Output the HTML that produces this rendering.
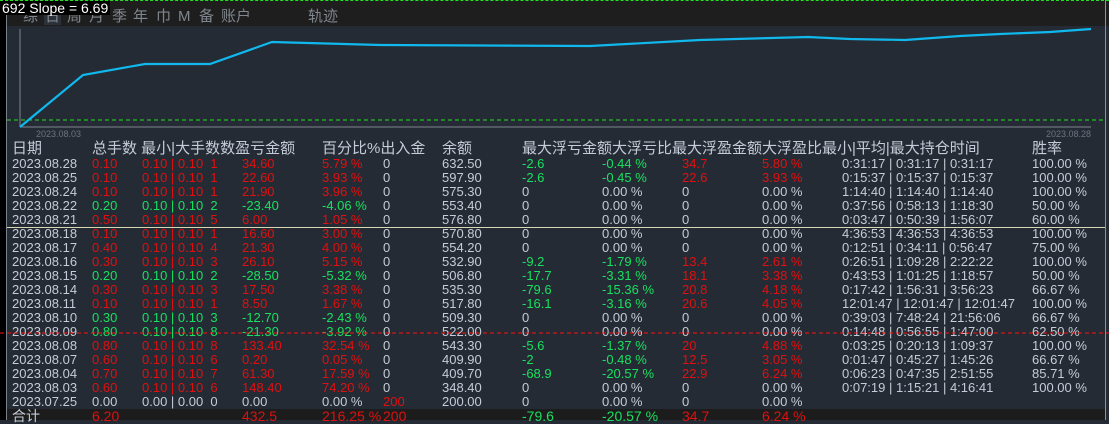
<!DOCTYPE html>
<html><head><meta charset="utf-8"><style>
*{margin:0;padding:0;box-sizing:border-box}
body{width:1109px;height:420px;overflow:hidden;background:#252b34;font-family:"Liberation Sans","Noto Sans CJK SC",sans-serif;color:#c3ccd8;position:relative}
.abs{position:absolute}
.r{position:absolute;left:0;width:1109px;height:14px;font-size:13px;line-height:14px;white-space:pre}
.r span{position:absolute;top:0}
.R{color:#e01010}.G{color:#18e060}
.h{font-size:15px;color:#c3ccd8}
.t{position:absolute;top:8px;font-size:15px;color:#80868e;line-height:18px}
</style></head><body>
<div class="abs" style="left:0;top:0;width:1109px;height:26px;background:#1e1e1e"></div>
<div class="abs" style="left:0;top:0;width:7px;height:420px;background:#000"></div>
<div class="abs" style="left:6px;top:0;width:1px;height:420px;background:#7a828c"></div>
<div class="abs" style="left:1105px;top:0;width:1px;height:420px;background:#8a929c"></div>
<div class="abs" style="left:0;top:0;width:1109px;height:0;border-top:1px dashed #22e022"></div>
<div class="abs" style="left:44px;top:10px;width:17px;height:15px;background:#2c3038"></div>
<span class="t" style="left:23px">综</span><span class="t" style="left:45px">日</span><span class="t" style="left:67px">周</span><span class="t" style="left:89px">月</span><span class="t" style="left:112px">季</span><span class="t" style="left:133px">年</span><span class="t" style="left:156px">巾</span><span class="t" style="left:178px">M</span><span class="t" style="left:199px">备</span><span class="t" style="left:221px">账户</span><span class="t" style="left:308px">轨迹</span>
<div class="abs" style="left:0;top:1px;font-size:14px;color:#fff;background:#000;padding:0 2px;line-height:14px">692 Slope = 6.69</div>
<svg class="abs" style="left:0;top:0" width="1109" height="140">
<line x1="20" y1="29" x2="20" y2="127" stroke="#80868e"/>
<line x1="20" y1="127" x2="1091" y2="127" stroke="#80868e"/>
<line x1="7" y1="120" x2="1106" y2="120" stroke="#22e022" stroke-dasharray="4,3"/>
<polyline fill="none" stroke="#10b8ee" stroke-width="2.2" points="20,127 83,75 145,64 210,64 272,42 380,45 590,46 700,40 808,37 850,39 905,40 960,36 1000,34 1050,32 1091,29"/>
<text x="36" y="137" font-size="9" fill="#6a7480" font-family="Liberation Sans">2023.08.03</text>
<text x="1046" y="137" font-size="9" fill="#6a7480" font-family="Liberation Sans">2023.08.28</text>
</svg>
<div class="r h" style="top:142px;height:17px"><span style="left:12px">日期</span><span style="left:92px">总手数 最小|大手数数盈亏金额</span><span style="left:322px">百分比%出入金</span><span style="left:442px">余额</span><span style="left:522px">最大浮亏金额大浮亏比最大浮盈金额大浮盈比最小|平均|最大持仓时间</span><span style="left:1032px">胜率</span></div>
<div class="abs" style="left:7px;top:227px;width:1098px;height:1px;background:#d8d8b0"></div>
<div class="abs" style="left:7px;top:409px;width:1098px;height:11px;background:#1c1c1c"></div>
<div class="r" style="top:157px"><span style="left:12px">2023.08.28</span><span class="R" style="left:92px">0.10</span><span class="R" style="left:142px">0.10 | 0.10  1</span><span class="R" style="left:242px">34.60</span><span class="R" style="left:322px">5.79 %</span><span style="left:383px">0</span><span style="left:442px">632.50</span><span class="G" style="left:522px">-2.6</span><span class="G" style="left:602px">-0.44 %</span><span class="R" style="left:682px">34.7</span><span class="R" style="left:762px">5.80 %</span><span style="left:842px">0:31:17 | 0:31:17 | 0:31:17</span><span style="left:1032px">100.00 %</span></div>
<div class="r" style="top:171px"><span style="left:12px">2023.08.25</span><span class="R" style="left:92px">0.10</span><span class="R" style="left:142px">0.10 | 0.10  1</span><span class="R" style="left:242px">22.60</span><span class="R" style="left:322px">3.93 %</span><span style="left:383px">0</span><span style="left:442px">597.90</span><span class="G" style="left:522px">-2.6</span><span class="G" style="left:602px">-0.45 %</span><span class="R" style="left:682px">22.6</span><span class="R" style="left:762px">3.93 %</span><span style="left:842px">0:15:37 | 0:15:37 | 0:15:37</span><span style="left:1032px">100.00 %</span></div>
<div class="r" style="top:185px"><span style="left:12px">2023.08.24</span><span class="R" style="left:92px">0.10</span><span class="R" style="left:142px">0.10 | 0.10  1</span><span class="R" style="left:242px">21.90</span><span class="R" style="left:322px">3.96 %</span><span style="left:383px">0</span><span style="left:442px">575.30</span><span style="left:522px">0</span><span style="left:602px">0.00 %</span><span style="left:682px">0</span><span style="left:762px">0.00 %</span><span style="left:842px">1:14:40 | 1:14:40 | 1:14:40</span><span style="left:1032px">100.00 %</span></div>
<div class="r" style="top:199px"><span style="left:12px">2023.08.22</span><span class="G" style="left:92px">0.20</span><span class="G" style="left:142px">0.10 | 0.10  2</span><span class="G" style="left:242px">-23.40</span><span class="G" style="left:322px">-4.06 %</span><span style="left:383px">0</span><span style="left:442px">553.40</span><span style="left:522px">0</span><span style="left:602px">0.00 %</span><span style="left:682px">0</span><span style="left:762px">0.00 %</span><span style="left:842px">0:37:56 | 0:58:13 | 1:18:30</span><span style="left:1032px">50.00 %</span></div>
<div class="r" style="top:213px"><span style="left:12px">2023.08.21</span><span class="R" style="left:92px">0.50</span><span class="R" style="left:142px">0.10 | 0.10  5</span><span class="R" style="left:242px">6.00</span><span class="R" style="left:322px">1.05 %</span><span style="left:383px">0</span><span style="left:442px">576.80</span><span style="left:522px">0</span><span style="left:602px">0.00 %</span><span style="left:682px">0</span><span style="left:762px">0.00 %</span><span style="left:842px">0:03:47 | 0:50:39 | 1:56:07</span><span style="left:1032px">60.00 %</span></div>
<div class="r" style="top:227px"><span style="left:12px">2023.08.18</span><span class="R" style="left:92px">0.10</span><span class="R" style="left:142px">0.10 | 0.10  1</span><span class="R" style="left:242px">16.60</span><span class="R" style="left:322px">3.00 %</span><span style="left:383px">0</span><span style="left:442px">570.80</span><span style="left:522px">0</span><span style="left:602px">0.00 %</span><span style="left:682px">0</span><span style="left:762px">0.00 %</span><span style="left:842px">4:36:53 | 4:36:53 | 4:36:53</span><span style="left:1032px">100.00 %</span></div>
<div class="r" style="top:241px"><span style="left:12px">2023.08.17</span><span class="R" style="left:92px">0.40</span><span class="R" style="left:142px">0.10 | 0.10  4</span><span class="R" style="left:242px">21.30</span><span class="R" style="left:322px">4.00 %</span><span style="left:383px">0</span><span style="left:442px">554.20</span><span style="left:522px">0</span><span style="left:602px">0.00 %</span><span style="left:682px">0</span><span style="left:762px">0.00 %</span><span style="left:842px">0:12:51 | 0:34:11 | 0:56:47</span><span style="left:1032px">75.00 %</span></div>
<div class="r" style="top:255px"><span style="left:12px">2023.08.16</span><span class="R" style="left:92px">0.30</span><span class="R" style="left:142px">0.10 | 0.10  3</span><span class="R" style="left:242px">26.10</span><span class="R" style="left:322px">5.15 %</span><span style="left:383px">0</span><span style="left:442px">532.90</span><span class="G" style="left:522px">-9.2</span><span class="G" style="left:602px">-1.79 %</span><span class="R" style="left:682px">13.4</span><span class="R" style="left:762px">2.61 %</span><span style="left:842px">0:26:51 | 1:09:28 | 2:22:22</span><span style="left:1032px">100.00 %</span></div>
<div class="r" style="top:269px"><span style="left:12px">2023.08.15</span><span class="G" style="left:92px">0.20</span><span class="G" style="left:142px">0.10 | 0.10  2</span><span class="G" style="left:242px">-28.50</span><span class="G" style="left:322px">-5.32 %</span><span style="left:383px">0</span><span style="left:442px">506.80</span><span class="G" style="left:522px">-17.7</span><span class="G" style="left:602px">-3.31 %</span><span class="R" style="left:682px">18.1</span><span class="R" style="left:762px">3.38 %</span><span style="left:842px">0:43:53 | 1:01:25 | 1:18:57</span><span style="left:1032px">50.00 %</span></div>
<div class="r" style="top:283px"><span style="left:12px">2023.08.14</span><span class="R" style="left:92px">0.30</span><span class="R" style="left:142px">0.10 | 0.10  3</span><span class="R" style="left:242px">17.50</span><span class="R" style="left:322px">3.38 %</span><span style="left:383px">0</span><span style="left:442px">535.30</span><span class="G" style="left:522px">-79.6</span><span class="G" style="left:602px">-15.36 %</span><span class="R" style="left:682px">20.8</span><span class="R" style="left:762px">4.18 %</span><span style="left:842px">0:17:42 | 1:56:31 | 3:56:23</span><span style="left:1032px">66.67 %</span></div>
<div class="r" style="top:297px"><span style="left:12px">2023.08.11</span><span class="R" style="left:92px">0.10</span><span class="R" style="left:142px">0.10 | 0.10  1</span><span class="R" style="left:242px">8.50</span><span class="R" style="left:322px">1.67 %</span><span style="left:383px">0</span><span style="left:442px">517.80</span><span class="G" style="left:522px">-16.1</span><span class="G" style="left:602px">-3.16 %</span><span class="R" style="left:682px">20.6</span><span class="R" style="left:762px">4.05 %</span><span style="left:842px">12:01:47 | 12:01:47 | 12:01:47</span><span style="left:1032px">100.00 %</span></div>
<div class="r" style="top:311px"><span style="left:12px">2023.08.10</span><span class="G" style="left:92px">0.30</span><span class="G" style="left:142px">0.10 | 0.10  3</span><span class="G" style="left:242px">-12.70</span><span class="G" style="left:322px">-2.43 %</span><span style="left:383px">0</span><span style="left:442px">509.30</span><span style="left:522px">0</span><span style="left:602px">0.00 %</span><span style="left:682px">0</span><span style="left:762px">0.00 %</span><span style="left:842px">0:39:03 | 7:48:24 | 21:56:06</span><span style="left:1032px">66.67 %</span></div>
<div class="r" style="top:325px"><span style="left:12px">2023.08.09</span><span class="G" style="left:92px">0.80</span><span class="G" style="left:142px">0.10 | 0.10  8</span><span class="G" style="left:242px">-21.30</span><span class="G" style="left:322px">-3.92 %</span><span style="left:383px">0</span><span style="left:442px">522.00</span><span style="left:522px">0</span><span style="left:602px">0.00 %</span><span style="left:682px">0</span><span style="left:762px">0.00 %</span><span style="left:842px">0:14:48 | 0:56:55 | 1:47:00</span><span style="left:1032px">62.50 %</span></div>
<div class="r" style="top:339px"><span style="left:12px">2023.08.08</span><span class="R" style="left:92px">0.80</span><span class="R" style="left:142px">0.10 | 0.10  8</span><span class="R" style="left:242px">133.40</span><span class="R" style="left:322px">32.54 %</span><span style="left:383px">0</span><span style="left:442px">543.30</span><span class="G" style="left:522px">-5.6</span><span class="G" style="left:602px">-1.37 %</span><span class="R" style="left:682px">20</span><span class="R" style="left:762px">4.88 %</span><span style="left:842px">0:03:25 | 0:20:13 | 1:09:37</span><span style="left:1032px">100.00 %</span></div>
<div class="r" style="top:353px"><span style="left:12px">2023.08.07</span><span class="R" style="left:92px">0.60</span><span class="R" style="left:142px">0.10 | 0.10  6</span><span class="R" style="left:242px">0.20</span><span class="R" style="left:322px">0.05 %</span><span style="left:383px">0</span><span style="left:442px">409.90</span><span class="G" style="left:522px">-2</span><span class="G" style="left:602px">-0.48 %</span><span class="R" style="left:682px">12.5</span><span class="R" style="left:762px">3.05 %</span><span style="left:842px">0:01:47 | 0:45:27 | 1:45:26</span><span style="left:1032px">66.67 %</span></div>
<div class="r" style="top:367px"><span style="left:12px">2023.08.04</span><span class="R" style="left:92px">0.70</span><span class="R" style="left:142px">0.10 | 0.10  7</span><span class="R" style="left:242px">61.30</span><span class="R" style="left:322px">17.59 %</span><span style="left:383px">0</span><span style="left:442px">409.70</span><span class="G" style="left:522px">-68.9</span><span class="G" style="left:602px">-20.57 %</span><span class="R" style="left:682px">22.9</span><span class="R" style="left:762px">6.24 %</span><span style="left:842px">0:06:23 | 0:47:35 | 2:51:55</span><span style="left:1032px">85.71 %</span></div>
<div class="r" style="top:381px"><span style="left:12px">2023.08.03</span><span class="R" style="left:92px">0.60</span><span class="R" style="left:142px">0.10 | 0.10  6</span><span class="R" style="left:242px">148.40</span><span class="R" style="left:322px">74.20 %</span><span style="left:383px">0</span><span style="left:442px">348.40</span><span style="left:522px">0</span><span style="left:602px">0.00 %</span><span style="left:682px">0</span><span style="left:762px">0.00 %</span><span style="left:842px">0:07:19 | 1:15:21 | 4:16:41</span><span style="left:1032px">100.00 %</span></div>
<div class="r" style="top:395px"><span style="left:12px">2023.07.25</span><span style="left:92px">0.00</span><span style="left:142px">0.00 | 0.00  0</span><span style="left:242px">0.00</span><span style="left:322px">0.00 %</span><span class="R" style="left:383px">200</span><span style="left:442px">200.00</span><span style="left:522px">0</span><span style="left:602px">0.00 %</span><span style="left:682px">0</span><span style="left:762px">0.00 %</span></div>
<div class="r" style="top:409px;font-size:14px"><span style="left:12px">合计</span><span class="R" style="left:92px">6.20</span><span class="R" style="left:242px">432.5</span><span class="R" style="left:322px">216.25 %</span><span class="R" style="left:383px">200</span><span class="G" style="left:522px">-79.6</span><span class="G" style="left:602px">-20.57 %</span><span class="R" style="left:682px">34.7</span><span class="R" style="left:762px">6.24 %</span></div>
<svg class="abs" style="left:0;top:332px;z-index:5" width="1109" height="2"><line x1="0" y1="1" x2="1109" y2="1" stroke="#ff1010" stroke-width="1" stroke-dasharray="4,3"/></svg>
</body></html>
